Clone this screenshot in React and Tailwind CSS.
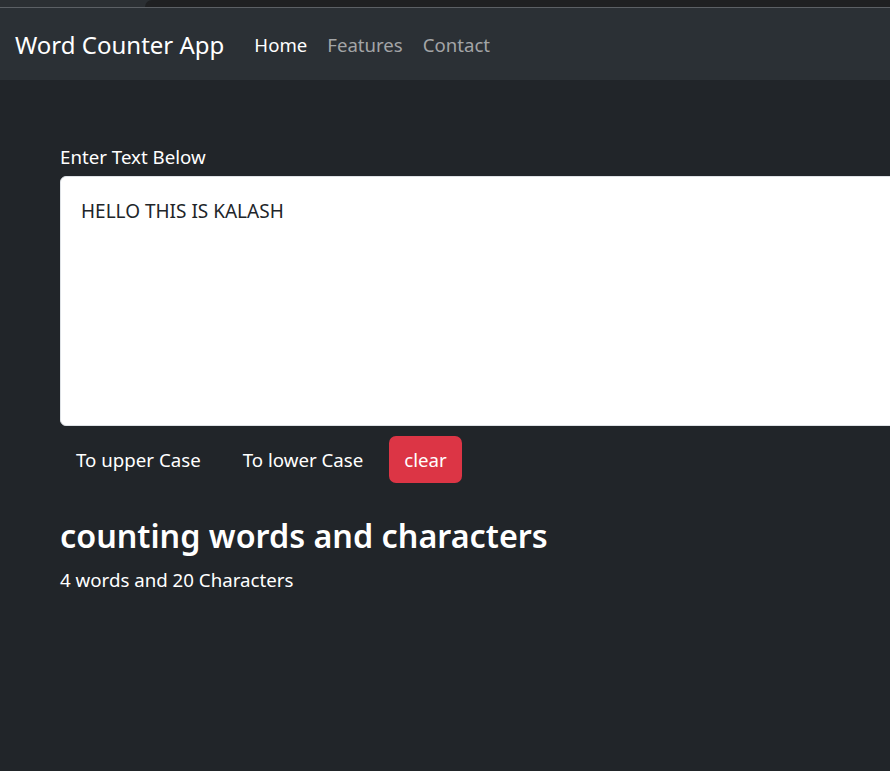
import { useState } from 'react';

export default function App() {
    const [text, setText] = useState('HELLO THIS IS KALASH');

    const words = text.split(/\s+/).filter((w) => w.length > 0).length;

    return (
        <div className="min-h-screen w-full overflow-hidden bg-[#212529] text-white" style={{ fontFamily: '"Noto Sans", "Open Sans", sans-serif' }}>
            {/* browser strip */}
            <div className="flex h-[7px] bg-[#2b2f33]">
                <div className="w-[145px]" />
                <div className="flex-1 rounded-tl-[8px] bg-[#1f2022]" />
            </div>
            <div className="h-px bg-[#5c6065]" />

            {/* Navbar */}
            <nav className="flex h-[72px] items-center bg-[#2b3035] px-[15px] pt-[2px]">
                <a className="mr-[20px] text-[24px] text-white">Word Counter App</a>
                <ul className="flex text-[18.6px]">
                    <li><a className="block px-[10px] text-white">Home</a></li>
                    <li><a className="block px-[10px] text-[#a3a5a7]">Features</a></li>
                    <li><a className="block px-[10px] text-[#a3a5a7]">Contact</a></li>
                </ul>
            </nav>

            <div className="pl-[60px] pt-[64px]">
                <label className="mb-[6px] block text-[18.7px] leading-[26px]">Enter Text Below</label>
                <textarea
                    value={text}
                    onChange={(e) => setText(e.target.value)}
                    className="block h-[250px] w-[900px] resize-none rounded-[6px] border border-[#dee2e6] bg-white px-[20px] pt-[19px] pb-[20px] text-[19px] leading-[30px] text-[#212529] outline-none"
                />

                <div className="mt-[10px] flex gap-[10px] text-[18.7px]">
                    <button onClick={() => setText(text.toUpperCase())} className="h-[47px] rounded-[7px] px-[16px] pt-[2px] text-white">
                        To upper Case
                    </button>
                    <button onClick={() => setText(text.toLowerCase())} className="h-[47px] rounded-[7px] px-[16px] pt-[2px] text-white">
                        To lower Case
                    </button>
                    <button onClick={() => setText('')} className="h-[47px] rounded-[7px] bg-[#dc3545] px-[15px] pt-[2px] text-white">
                        clear
                    </button>
                </div>

                <h2 className="mt-[32px] text-[32.3px] font-semibold leading-[40px]">counting words and characters</h2>
                <p className="mt-[12px] text-[18.7px] leading-[26px]">
                    {words} words and {text.length} Characters
                </p>
            </div>
        </div>
    );
}
